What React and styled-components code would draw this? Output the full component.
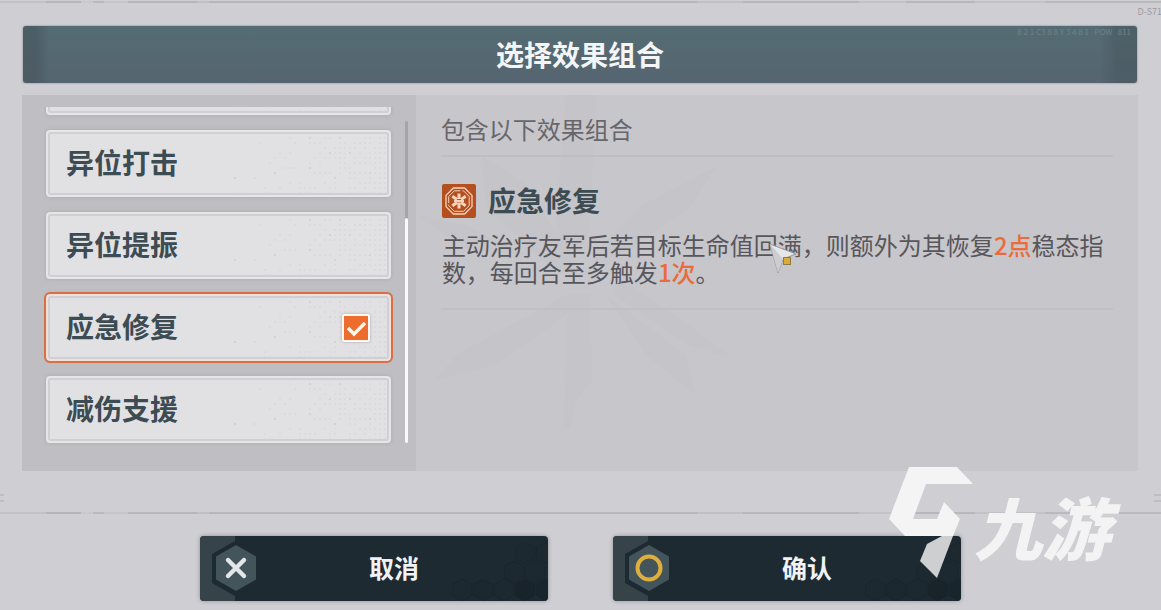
import React, { useState } from 'react';
import styled, { createGlobalStyle, css } from 'styled-components';

const SKILLS = ['异位打击', '异位提振', '应急修复', '减伤支援'];

const GlobalStyle = createGlobalStyle`
  * {
    box-sizing: border-box;
  }

  body {
    margin: 0;
    background: #cfced3;
    font-family: 'Noto Sans CJK SC', 'Noto Sans', sans-serif;
    color: #57565b;
  }
`;

const DOTS = [];
for (let row = 0; row < 13; row += 1) {
  for (let col = 0; col < 38; col += 1) {
    const seed = (row * 37 + col * 61 + row * col * 13 + col * col * 7) % 101;
    if (seed < (col * col) / 16) {
      DOTS.push({ x: col * 5 + 3, y: row * 5 + 3, r: seed % 19 === 3 ? 1.1 : 0.7 });
    }
  }
}

const HEXES = [
  [10, 54, 0.1], [31, 54, 0.3], [52, 54, 0.1], [73, 54, 0.9], [94, 54, 0.8],
  [62, 36, 0.1], [83, 36, 0.1], [73, 17, 0.1], [94, 17, 0.2],
];

function hexPoints(cx, cy, r) {
  const w = r * 0.87;
  return `${cx},${cy - r} ${cx + w},${cy - r / 2} ${cx + w},${cy + r / 2} ${cx},${cy + r} ${cx - w},${cy + r / 2} ${cx - w},${cy - r / 2}`;
}

function CardDots() {
  return (
    <CardPattern viewBox="0 0 192 67" width="192" height="67" aria-hidden="true">
      {DOTS.map(({ x, y, r }) => (
        <circle key={`${x}-${y}`} cx={x} cy={y} r={r} fill="#d0d0d4" />
      ))}
    </CardPattern>
  );
}

function RepairIcon() {
  return (
    <svg width="34" height="34" viewBox="0 0 34 34" aria-hidden="true">
      <rect width="34" height="34" rx="2" fill="#b4501f" />
      <path d="M11.400 4h11.200L30 11.400v11.200L22.600 30H11.400L4 22.600V11.400z" fill="none" stroke="#f6d3bd" strokeWidth="1.300" />
      <path d="M20.500 6.800h1l5.700 5.700v9.200l-5.700 5.600h-9.200l-5.600-5.600v-1M6.700 19v-6.500l5.600-5.700h6" fill="none" stroke="#f6d3bd" strokeWidth="1" />
      <path d="M17 9.500v5.500M17 18.500v6M10.300 12.200l4.700 3.300M23.700 12.200l-4.700 3.300M10.300 21.800l4.700-3.300M23.700 21.800l-4.700-3.300" stroke="#f6d3bd" strokeWidth="3" />
      <path d="M12 17h10" stroke="#f6d3bd" strokeWidth="2" />
    </svg>
  );
}

function ButtonArt({ kind }) {
  return (
    <ButtonBadge width="60" height="65" viewBox="0 0 60 65" aria-hidden="true">
      <path d="M0 0h35v5L12 18v29l23 13v5H0z" fill="#36444a" />
      <polygon points={hexPoints(36, 32, 23)} fill="#44545b" />
      {kind === 'cancel' ? (
        <path d="M28 24l16 16M44 24l-16 16" stroke="#e4e7e9" strokeWidth="4.400" strokeLinecap="round" />
      ) : (
        <circle cx="36" cy="32" r="11.500" fill="none" stroke="#dfaf3d" strokeWidth="4" />
      )}
    </ButtonBadge>
  );
}

function ButtonHexes() {
  return (
    <ButtonPattern width="96" height="65" viewBox="0 0 96 65" aria-hidden="true">
      {HEXES.map(([x, y, alpha]) => (
        <polygon
          key={`${x}-${y}`}
          points={hexPoints(x, y, 11)}
          fill="#17242a"
          fillOpacity={alpha}
          stroke="#18252b"
          strokeOpacity="0.6"
        />
      ))}
    </ButtonPattern>
  );
}

export default function App() {
  const [selected, setSelected] = useState('应急修复');

  return (
    <Page>
      <GlobalStyle />
      <WornLine />
      <Serial>D-S710</Serial>
      <Header>
        <Title>选择效果组合</Title>
        <HeaderCode>8 2 1 C3 8 8 Y 3 4 8 1 &nbsp; POW &nbsp; 811</HeaderCode>
      </Header>
      <Content>
        <Sidebar>
          <SkillList>
            <SkillCard as="div" aria-hidden="true"><CardDots /></SkillCard>
            {SKILLS.map((name) => (
              <SkillCard key={name} $active={name === selected}>
                <CardDots />
                <SkillName>{name}</SkillName>
                <Tick
                  type="checkbox"
                  checked={name === selected}
                  onChange={() => setSelected(name)}
                />
                {name === selected && (
                  <TickMark viewBox="0 0 28 28" width="28" height="28" aria-hidden="true">
                    <path d="M6 14l6 6 11-11" fill="none" stroke="#fff7ee" strokeWidth="3.400" />
                  </TickMark>
                )}
              </SkillCard>
            ))}
          </SkillList>
          <ScrollTrack>
            <ScrollThumb />
          </ScrollTrack>
        </Sidebar>
        <Detail>
          <Emblem viewBox="0 0 360 375" width="360" height="375" aria-hidden="true">
            <path d="M150 0h30l-6 130-10 30h-18l-6-30zM66 60l44 30 50 80-20 10-70-70zM300 72l-26 40-90 62-8-14 50-50zM20 284l20-24 110-60 14 10-84 60zM316 262l-40-10-80-54 8-14 60 40zM190 200l80 60 10 40-50-40zM148 335l4-135h22l2 85-16 20-6 30zM0 120l50 10 60 30-60-6z" fill="#c0bfc4" />
          </Emblem>
          <DetailHeading>包含以下效果组合</DetailHeading>
          <Skill>
            <SkillTitle>
              <RepairIcon />
              <SkillTitleText>应急修复</SkillTitleText>
            </SkillTitle>
            <Description>
              主动治疗友军后若目标生命值回满，则额外为其恢复<Mark>2点</Mark>稳态指数，每回合至多触发<Mark>1次</Mark>。
            </Description>
          </Skill>
        </Detail>
      </Content>
      <EdgeMarks>
        <EdgeMark $width="4px" />
        <EdgeMark $width="7px" />
      </EdgeMarks>
      <WornLine />
      <Footer>
        <ActionButton type="button">
          <ButtonArt kind="cancel" />
          <ButtonHexes />
          取消
        </ActionButton>
        <ActionButton type="button">
          <ButtonArt kind="confirm" />
          <ButtonHexes />
          确认
        </ActionButton>
      </Footer>
      <Pointer width="32" height="34" viewBox="0 0 32 34" aria-hidden="true">
        <path d="M3 3l26 10-13 5-5 14z" fill="#e6e6e8" stroke="#98979b" strokeWidth="1" />
        <path d="M3 3l13 15-5 14z" fill="#cdcdd0" />
        <rect x="16.500" y="16.500" width="7" height="7" fill="#dbab35" stroke="#8b7a4a" />
      </Pointer>
      <Watermark>
        <svg width="86" height="114" viewBox="0 0 86 114" aria-hidden="true">
          <path d="M21 1h48l16 17H38L25 53h24l7-17 16 17-7 17H17L1 53z" fill="#f4f4f5" />
          <path d="M54 70h11l-16 42-17-17 7-17z" fill="#f4f4f5" fillOpacity="0.82" />
        </svg>
        <WatermarkText>九游</WatermarkText>
      </Watermark>
    </Page>
  );
}

const Page = styled.div`
  position: relative;
  min-height: 100vh;
  padding-top: 1px;
  overflow: hidden;
`;

const WornLine = styled.div`
  height: 2px;
  background: linear-gradient(
    90deg,
    #c2c1c6 4%, #b6b5ba 4% 7%, #c9c8cd 7% 8%, #b9b8bd 8% 9%, #c6c5ca 9% 11%,
    #b7b6bb 11% 17%, #c0bfc4 17% 18%, #b7b6bb 18% 60%, #c0bfc4 60% 64%,
    #b7b6bb 64% 74%, #c3c2c7 74% 78%, #b8b7bc 78% 84%, #c3c2c7 84% 90%, #bab9be 90%
  );
`;

const Serial = styled.span`
  position: absolute;
  top: 6px;
  right: -6px;
  color: #9b9a9f;
  font-size: 9px;
  line-height: 12px;
`;

const Header = styled.header`
  position: relative;
  margin: 23px 24px 12px 23px;
  border-radius: 3px;
  background:
    linear-gradient(90deg, rgba(70, 84, 92, 0.6) 12px, rgba(70, 84, 92, 0.3) 20px, transparent 26px, transparent calc(100% - 38px), rgba(70, 84, 92, 0.5) calc(100% - 20px)),
    linear-gradient(#546c73, #566571);
  box-shadow: 0 0 2px #6d7980;
`;

const Title = styled.h1`
  margin: 0;
  color: #f3f5f6;
  font-size: 28px;
  font-weight: 700;
  line-height: 57px;
  text-align: center;
`;

const HeaderCode = styled.span`
  position: absolute;
  top: 1px;
  right: 6px;
  color: #71828a;
  font-size: 8px;
  line-height: 10px;
`;

const Content = styled.main`
  display: grid;
  grid-template-columns: 6fr 11fr;
  margin: 0 23px 0 22px;
`;

const Sidebar = styled.aside`
  display: flex;
  gap: 11px;
  padding: 12px 8px 25px 22px;
  background: #bfbec3;
`;

const SkillList = styled.div`
  display: flex;
  flex: 1;
  flex-direction: column;
  justify-content: flex-end;
  gap: 15px;
  height: 339px;
  padding: 0 3px 3px 2px;
  overflow: hidden;
`;

const SkillCard = styled.label`
  position: relative;
  display: flex;
  flex-shrink: 0;
  align-items: center;
  justify-content: space-between;
  height: 67px;
  padding: 0 19px 0 18px;
  border: 2px solid #e6e6e9;
  border-radius: 4px;
  background: #e1e1e4;
  box-shadow: inset 0 0 0 2px #d0d0d4, 0 0 4px #a9a8ad;
  cursor: pointer;

  ${({ $active }) => $active && css`
    border-color: #f3dfd5;
    outline: 2px solid #d67046;
  `}
`;

const CardPattern = styled.svg`
  position: absolute;
  top: -2px;
  right: 0;
`;

const SkillName = styled.span`
  position: relative;
  padding-bottom: 4px;
  color: #3d4b52;
  font-size: 28px;
  font-weight: 700;
  line-height: 40px;
`;

const Tick = styled.input`
  position: relative;
  width: 28px;
  height: 28px;
  margin: 0;
  appearance: none;

  &:checked {
    border: 2px solid #fff7f0;
    border-radius: 2px;
    background: #ec6d2d;
    box-shadow: 0 0 3px #a9a8ad;
  }
`;

const TickMark = styled.svg`
  position: absolute;
  right: 19px;
  pointer-events: none;
`;

const ScrollTrack = styled.div`
  width: 3px;
  margin: 14px 0 3px;
  padding-top: 97px;
  border-radius: 2px;
  background: #a5a4a9;
`;

const ScrollThumb = styled.div`
  height: 100%;
  border-radius: 2px;
  background: #fafafb;
`;

const Detail = styled.section`
  position: relative;
  padding: 19px 25px;
  background: #c7c6cb;
`;

const Emblem = styled.svg`
  position: absolute;
  top: 0;
  left: 0;
  opacity: 0.2;
`;

const DetailHeading = styled.h2`
  position: relative;
  margin: 0;
  padding-bottom: 11px;
  border-bottom: 2px solid #bfbec3;
  color: #67666b;
  font-size: 24px;
  font-weight: 400;
  line-height: 30px;
`;

const Skill = styled.article`
  position: relative;
  padding: 23px 1px 23px;
  border-bottom: 2px solid #c0bfc4;
`;

const SkillTitle = styled.h3`
  display: flex;
  align-items: center;
  gap: 12px;
  margin: 0 0 9px;
  color: #3d4b52;
  font-size: 28px;
  font-weight: 700;
  line-height: 40px;
`;

const SkillTitleText = styled.span`
  padding-bottom: 2px;
`;

const Description = styled.p`
  margin: 0;
  font-size: 24px;
  line-height: 27px;
`;

const Mark = styled.span`
  color: #ea6c3c;
  font-weight: 500;
`;

const EdgeMarks = styled.div`
  display: flex;
  justify-content: space-between;
  padding: 23px 0 10px;
`;

const EdgeMark = styled.span`
  width: ${({ $width }) => $width};
  height: 8px;
  border: solid #bebdc2;
  border-width: 2px 0;
`;

const Footer = styled.footer`
  display: flex;
  justify-content: center;
  gap: 65px;
  padding: 22px 20px 9px;
`;

const ActionButton = styled.button`
  position: relative;
  flex: 0 1 348px;
  height: 65px;
  padding: 0 0 3px 40px;
  border: 0;
  border-radius: 4px;
  overflow: hidden;
  background: #1e2a31;
  box-shadow: 0 0 4px #8f9096;
  color: #f0f2f4;
  font: 700 25px 'Noto Sans CJK SC', sans-serif;
`;

const ButtonBadge = styled.svg`
  position: absolute;
  top: 0;
  left: 0;
`;

const ButtonPattern = styled.svg`
  position: absolute;
  right: 0;
  bottom: 0;
`;

const Pointer = styled.svg`
  position: absolute;
  top: 241px;
  left: 767px;
`;

const Watermark = styled.div`
  position: absolute;
  right: 51px;
  bottom: 30px;
  display: flex;
  align-items: center;
  color: #f3f3f4;
  pointer-events: none;
`;

const WatermarkText = styled.span`
  padding-top: 6px;
  font-size: 68px;
  font-style: italic;
  font-weight: 900;
  line-height: 80px;
`;
